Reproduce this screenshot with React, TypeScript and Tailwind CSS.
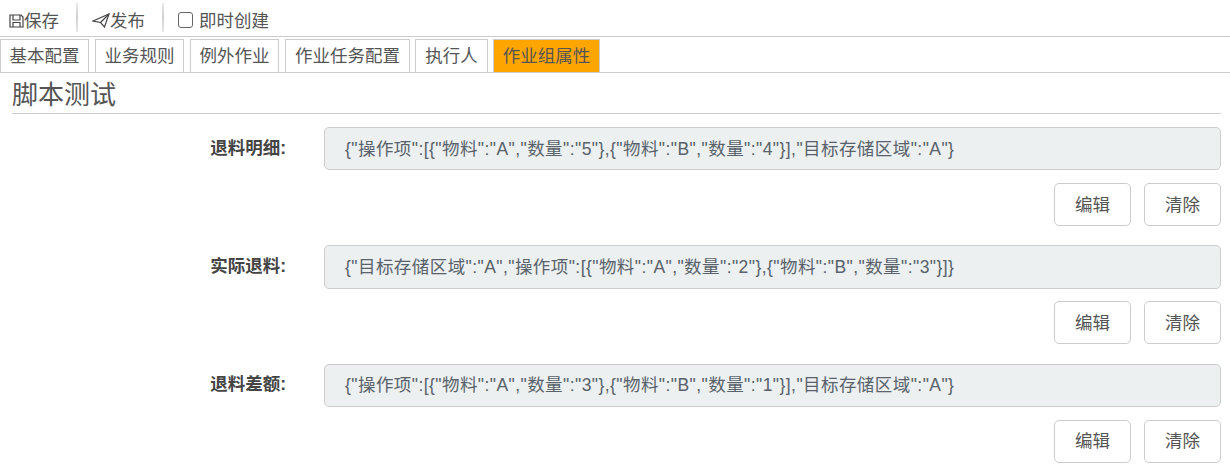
const FONT = "font-['Liberation_Sans','Noto_Sans_CJK_SC',sans-serif]";

const tabs = [
  { t: "基本配置", c: "w-[89px] mr-[6px]" },
  { t: "业务规则", c: "w-[89px] mr-[6px]" },
  { t: "例外作业", c: "w-[89px] mr-[6px]" },
  { t: "作业任务配置", c: "w-[125px] mr-[5px]" },
  { t: "执行人", c: "w-[73px] mr-[5px]" },
  { t: "作业组属性", c: "w-[107px] bg-[#ffa500]" },
];

const fields = [
  { label: "退料明细:", value: '{"操作项":[{"物料":"A","数量":"5"},{"物料":"B","数量":"4"}],"目标存储区域":"A"}' },
  { label: "实际退料:", value: '{"目标存储区域":"A","操作项":[{"物料":"A","数量":"2"},{"物料":"B","数量":"3"}]}' },
  { label: "退料差额:", value: '{"操作项":[{"物料":"A","数量":"3"},{"物料":"B","数量":"1"}],"目标存储区域":"A"}' },
];

function SaveIcon() {
  return (
    <svg width="15" height="14" viewBox="0 0 15 14" fill="none" stroke="#444" strokeWidth="1.2">
      <path d="M1 1h11l2 2v10H1z" />
      <path d="M4 1v5h7V1M4 13V8.500h7V13" />
    </svg>
  );
}

function SendIcon() {
  return (
    <svg width="18" height="15" viewBox="0 0 18 15" fill="none" stroke="#444" strokeWidth="1.2">
      <path d="M1 8 17 1 12.500 14 8.500 9.500 1 8z" />
      <path d="M8.500 9.500 17 1" />
    </svg>
  );
}

function Sep() {
  return <div className="w-[2px] h-[29px] -mt-[1px] bg-gradient-to-b from-[#e8e8e8] via-[#d0d0d0] to-[#e8e8e8]" />;
}

export default function App() {
  return (
    <div className={`${FONT} w-[1230px] h-[476px] bg-white text-[#555] overflow-hidden`}>
      <div className="h-[37px] flex items-center pl-[9px] border-b border-[#ccc] text-[17.5px] leading-6">
        <span className="flex items-center w-[67px] mt-[5px]"><SaveIcon /><span>保存</span></span>
        <Sep />
        <span className="flex items-center w-[84px] pl-[14px] mt-[5px]"><SendIcon /><span>发布</span></span>
        <Sep />
        <label className="flex items-center ml-[14px] mt-[5px]">
          <span className="w-[15px] h-[16px] border border-[#666] rounded-[3px] bg-white mr-[6px] -mt-[2px]" />
          即时创建
        </label>
      </div>
      <div className="h-[36px] flex items-end border-b border-[#ccc] text-[17.5px]">
        {tabs.map((x) => (
          <div key={x.t} className={`${x.c} h-[33px] flex items-center justify-center border border-b-0 border-[#ccc]`}>{x.t}</div>
        ))}
      </div>
      <div className="pr-[9px] pl-[12px]">
        <div className="h-[41px] border-b border-[#ccc] text-[26px] leading-[44px] text-[#555]">脚本测试</div>
        <div className="pt-[13.1px] flex flex-col gap-[19.05px]">
          {fields.map((f) => (
            <div key={f.label} className="flex flex-col gap-[12.8px]">
              <div className="flex items-center">
                <div className="w-[274px] pb-[2px] text-right font-bold text-[17.5px] text-[#444]">{f.label}</div>
                <div className="ml-[38px] flex-1 h-[43.2px] flex items-center px-[20px] bg-[#ecf0f1] border border-[#ccc] rounded-[5px] text-[17.5px] tracking-[0.44px] text-[#59626a]">{f.value}</div>
              </div>
              <div className="flex justify-end gap-[13px]">
                <button className="w-[77px] h-[43.2px] border border-[#ccc] rounded-[5px] text-[17.5px] text-[#555]">编辑</button>
                <button className="w-[77px] h-[43.2px] border border-[#ccc] rounded-[5px] text-[17.5px] text-[#555]">清除</button>
              </div>
            </div>
          ))}
        </div>
      </div>
    </div>
  );
}
